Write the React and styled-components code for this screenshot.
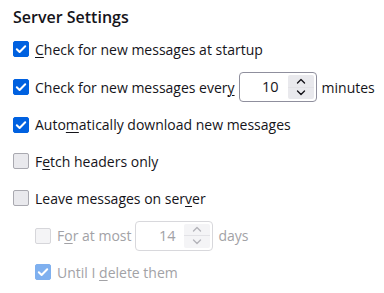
import React from "react";
import styled, { createGlobalStyle } from "styled-components";

const Global = createGlobalStyle`
  html, body { margin: 0; padding: 0; background: #fff; }
  body { font-family: "Open Sans", "Noto Sans", sans-serif; color: #15141a; }
`;

const Page = styled.div`
  width: 384px;
  height: 293px;
  box-sizing: border-box;
  padding: 5px 0 0 13px;
  overflow: hidden;
`;

const Title = styled.h2`
  margin: 0 0 6px 0;
  font-size: 16px;
  font-weight: 600;
  line-height: 24px;
`;

const List = styled.div`
  display: flex;
  flex-direction: column;
`;

const Row = styled.label`
  display: flex;
  align-items: center;
  height: ${(p) => p.$h || 37}px;
  padding-left: ${(p) => (p.$indent ? 22 : 0)}px;
  font-size: 14px;
  color: ${(p) => (p.$disabled ? "#a2a2a6" : "#15141a")};
`;

const Box = styled.span`
  width: 16px;
  height: 16px;
  box-sizing: border-box;
  border-radius: 2px;
  flex: none;
  margin-right: 6px;
  display: inline-flex;
  align-items: center;
  justify-content: center;
  background: ${(p) =>
    p.$checked ? (p.$disabled ? "#7fb0ef" : "#0061e0") : p.$disabled ? "#f4f4f6" : "#e9e9ed"};
  border: 1px solid
    ${(p) =>
      p.$checked ? (p.$disabled ? "#7fb0ef" : "#0061e0") : p.$disabled ? "#d6d6da" : "#a9a9b0"};
`;

const Label = styled.span`
  white-space: nowrap;
`;

const Key = styled.u`
  text-decoration-thickness: 1px;
  text-underline-offset: 2px;
`;

const Spin = styled.span`
  display: inline-flex;
  align-items: stretch;
  width: 78px;
  height: 30px;
  box-sizing: border-box;
  border: 1px solid ${(p) => (p.$disabled ? "#d8d8dc" : "#8f8f9d")};
  border-radius: 4px;
  margin: 0 5px 0 4px;
  padding: 2px;
  background: #fff;
`;

const SpinValue = styled.span`
  flex: 1;
  text-align: right;
  padding-right: 9px;
  line-height: 24px;
  font-size: 14.5px;
`;

const SpinButtons = styled.span`
  width: 26px;
  display: flex;
  flex-direction: column;
  background: ${(p) => (p.$disabled ? "#f4f4f6" : "#e9e9ed")};
  border-radius: 2px;
`;

const SpinBtn = styled.span`
  flex: 1;
  display: flex;
  align-items: center;
  justify-content: center;
  & + & {
    border-top: 1px solid ${(p) => (p.$disabled ? "#e2e2e6" : "#c8c8cf")};
  }
`;

const Check = ({ color = "#fff" }) => (
  <svg width="12" height="12" viewBox="0 0 12 12">
    <path d="M1.8 6.2 L4.6 9 L10.2 3.2" fill="none" stroke={color} strokeWidth="2" strokeLinecap="round" strokeLinejoin="round" />
  </svg>
);

const Chevron = ({ up, color }) => (
  <svg width="10" height="6" viewBox="0 0 10 6">
    <path d={up ? "M1.5 5 L5 1.5 L8.5 5" : "M1.5 1 L5 4.5 L8.5 1"} fill="none" stroke={color} strokeWidth="1.4" strokeLinecap="round" strokeLinejoin="round" />
  </svg>
);

const CheckBox = ({ checked, disabled }) => (
  <Box $checked={checked} $disabled={disabled}>
    {checked && <Check />}
  </Box>
);

const Spinner = ({ value, disabled }) => {
  const c = disabled ? "#b4b4ba" : "#15141a";
  return (
    <Spin $disabled={disabled}>
      <SpinValue>{value}</SpinValue>
      <SpinButtons $disabled={disabled}>
        <SpinBtn $disabled={disabled}><Chevron up color={c} /></SpinBtn>
        <SpinBtn $disabled={disabled}><Chevron color={c} /></SpinBtn>
      </SpinButtons>
    </Spin>
  );
};

export default function App() {
  return (
    <>
      <Global />
      <Page>
        <Title>Server Settings</Title>
        <List>
          <Row $h={28}>
            <CheckBox checked />
            <Label><Key>C</Key>heck for new messages at startup</Label>
          </Row>
          <Row $h={48}>
            <CheckBox checked />
            <Label>Check for new messages ever<Key>y</Key></Label>
            <Spinner value="10" />
            <Label>minutes</Label>
          </Row>
          <Row $h={27}>
            <CheckBox checked />
            <Label>Auto<Key>m</Key>atically download new messages</Label>
          </Row>
          <Row $h={46}>
            <CheckBox />
            <Label>F<Key>e</Key>tch headers only</Label>
          </Row>
          <Row $h={28}>
            <CheckBox />
            <Label>Leave messages on ser<Key>v</Key>er</Label>
          </Row>
          <Row $h={47} $indent $disabled>
            <CheckBox disabled />
            <Label>F<Key>o</Key>r at most</Label>
            <Spinner value="14" disabled />
            <Label>days</Label>
          </Row>
          <Row $h={26} $indent $disabled>
            <CheckBox checked disabled />
            <Label>Until I <Key>d</Key>elete them</Label>
          </Row>
        </List>
      </Page>
    </>
  );
}
